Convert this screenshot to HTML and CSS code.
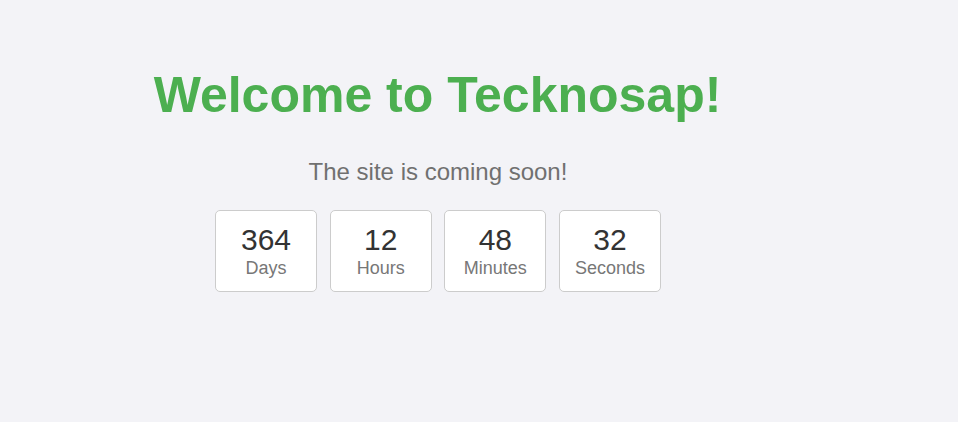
FILE: index.html
```html
<!DOCTYPE html>
<html lang="en">
<head>
<meta charset="utf-8">
<title>Tecknosap - Coming Soon</title>
<link rel="stylesheet" href="styles.css">
</head>
<body>
<main class="page">
  <h1 class="title">Welcome to Tecknosap!</h1>
  <p class="subtitle">The site is coming soon!</p>
  <div class="countdown">
    <div class="unit"><span class="num">364</span><span class="label">Days</span></div>
    <div class="unit"><span class="num">12</span><span class="label">Hours</span></div>
    <div class="unit"><span class="num">48</span><span class="label">Minutes</span></div>
    <div class="unit"><span class="num">32</span><span class="label">Seconds</span></div>
  </div>
</main>
</body>
</html>
```

FILE: styles.css
```css
html, body {
  margin: 0;
  background: #f3f3f7;
}
body {
  font-family: "Liberation Sans", Arial, sans-serif;
  padding: 8px;
}
.page {
  width: 860px;
  text-align: center;
  padding-top: 59px;
}
.title {
  margin: 0 0 0 -1px;
  font-size: 50px;
  font-weight: bold;
  color: #4caf50;
  line-height: 56px;
}
.subtitle {
  margin: 35px 0 0;
  font-size: 24px;
  line-height: 28px;
  color: #707070;
}
.countdown {
  display: flex;
  justify-content: center;
  gap: 12.67px;
  margin-top: 24px;
}
.unit {
  box-sizing: border-box;
  width: 102px;
  height: 82px;
  background: #fff;
  border: 1px solid #cccccc;
  border-radius: 5px;
  display: flex;
  flex-direction: column;
  align-items: center;
  padding-top: 12px;
}
.num {
  font-size: 30px;
  line-height: 33px;
  color: #333;
}
.label {
  font-size: 18px;
  line-height: 24px;
  color: #777;
}
```
